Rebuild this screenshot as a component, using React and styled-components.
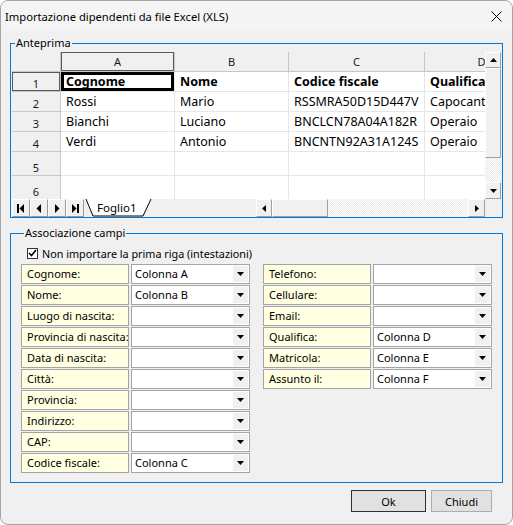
import React from "react";
import styled, { createGlobalStyle } from "styled-components";

const GlobalStyle = createGlobalStyle`
  html, body {
    margin: 0;
    padding: 0;
    background: #ffffff;
  }
  body {
    font-family: "Noto Sans", "DejaVu Sans", sans-serif;
    font-size: 11px;
    color: #000;
  }
  * {
    box-sizing: border-box;
  }
`;

const COLUMNS = [
  { key: "A", width: 114 },
  { key: "B", width: 114 },
  { key: "C", width: 136 },
  { key: "D", width: 114 },
];

const ROWS = [
  { n: 1, h: 20, bold: true, cells: ["Cognome", "Nome", "Codice fiscale", "Qualifica"] },
  { n: 2, h: 20, cells: ["Rossi", "Mario", "RSSMRA50D15D447V", "Capocantiere"] },
  { n: 3, h: 20, cells: ["Bianchi", "Luciano", "BNCLCN78A04A182R", "Operaio"] },
  { n: 4, h: 20, cells: ["Verdi", "Antonio", "BNCNTN92A31A124S", "Operaio"] },
  { n: 5, h: 24, cells: [] },
  { n: 6, h: 24, cells: [] },
];

const LEFT_FIELDS = [
  ["Cognome:", "Colonna A"],
  ["Nome:", "Colonna B"],
  ["Luogo di nascita:", ""],
  ["Provincia di nascita:", ""],
  ["Data di nascita:", ""],
  ["Città:", ""],
  ["Provincia:", ""],
  ["Indirizzo:", ""],
  ["CAP:", ""],
  ["Codice fiscale:", "Colonna C"],
];

const RIGHT_FIELDS = [
  ["Telefono:", ""],
  ["Cellulare:", ""],
  ["Email:", ""],
  ["Qualifica:", "Colonna D"],
  ["Matricola:", "Colonna E"],
  ["Assunto il:", "Colonna F"],
];

/* ---------- window chrome ---------- */

const Window = styled.div`
  width: 513px;
  height: 525px;
  border: 1px solid #a5a5a5;
  border-radius: 8px;
  background: #f0f0f0;
  overflow: hidden;
  display: flex;
  flex-direction: column;
`;

const TitleBar = styled.div`
  height: 30px;
  flex: none;
  background: #f4f4f4;
  display: flex;
  align-items: center;
  justify-content: space-between;
  padding: 0 10px 0 4px;
  font-size: 11.2px;
`;

const Body = styled.div`
  flex: 1;
  display: flex;
  flex-direction: column;
  gap: 8px;
  padding: 5px 9px 0;
`;

const Group = styled.fieldset`
  margin: 0;
  min-inline-size: 0;
  border: 1px solid #0078d7;
  padding: ${({ $pad }) => $pad};
`;

const Legend = styled.legend`
  font-size: 11px;
  line-height: 14px;
  padding: 0 1px;
  margin-left: 3px;
`;

/* ---------- spreadsheet ---------- */

const Spreadsheet = styled.div`
  height: 165px;
  display: flex;
  flex-direction: column;
  background: #ffffff;
`;

const SheetTop = styled.div`
  height: 147px;
  display: flex;
`;

const SheetView = styled.div`
  flex: 1;
  overflow: hidden;
  display: grid;
  grid-template-columns: 49px ${COLUMNS.map((c) => `${c.width}px`).join(" ")};
  grid-template-rows: 20px ${ROWS.map((r) => `${r.h}px`).join(" ")};
  align-content: start;
`;

const HeadCell = styled.div`
  background: #f0f0f0;
  border-right: 1px solid #c6c6c6;
  border-bottom: 1px solid #c6c6c6;
  display: flex;
  justify-content: center;
  align-items: ${({ $bottom }) => ($bottom ? "flex-end" : "center")};
  padding-bottom: ${({ $bottom }) => ($bottom ? "1px" : "0")};
  font-size: 11px;
  line-height: 13px;
  color: #1a1a1a;
  box-shadow: ${({ $active }) => ($active ? "inset 0 0 0 1px #5a5a5a" : "none")};
`;

const DataCell = styled.div`
  border-right: 1px solid #e6e6e6;
  border-bottom: 1px solid #e6e6e6;
  padding-left: 5px;
  font-size: 12.5px;
  line-height: 19px;
  font-weight: ${({ $bold }) => ($bold ? 700 : 400)};
  white-space: nowrap;
  overflow: hidden;
  box-shadow: ${({ $selected }) => ($selected ? "inset 0 0 0 3px #000" : "none")};
`;

const VScroll = styled.div`
  width: 16px;
  flex: none;
  display: flex;
  flex-direction: column;
`;

const HScroll = styled.div`
  width: 229px;
  flex: none;
  display: flex;
`;

const ScrollButton = styled.div`
  flex: none;
  width: ${({ $w }) => $w}px;
  height: ${({ $h }) => $h}px;
  background: #f0f0f0;
  border: 1px solid;
  border-color: #ffffff #a0a0a0 #a0a0a0 #ffffff;
  display: flex;
  align-items: center;
  justify-content: center;
`;

const ScrollTrack = styled.div`
  flex: 1;
  background: repeating-conic-gradient(#ffffff 0 25%, #e9e9e9 0 50%) 0 0 / 2px 2px;
`;

const TabBar = styled.div`
  height: 18px;
  display: flex;
  background: #f0f0f0;
`;

const NavButton = styled.div`
  width: 18px;
  height: 18px;
  flex: none;
  border: 1px solid;
  border-color: #ffffff #9a9a9a #9a9a9a #ffffff;
  display: flex;
  align-items: center;
  justify-content: center;
`;

const SheetTab = styled.div`
  position: relative;
  width: 70px;
  flex: none;
  padding-left: 13px;
  font-size: 11.5px;
  line-height: 17px;
`;

const TabShape = styled.svg`
  position: absolute;
  left: 0;
  top: 0;
`;

const TabLabel = styled.span`
  position: relative;
`;

const BarFill = styled.div`
  flex: 1;
`;

const Corner = styled.div`
  width: 16px;
  flex: none;
  background: #f0f0f0;
`;

/* ---------- field mapping ---------- */

const CheckRow = styled.label`
  height: 16px;
  margin: 0 0 3px 6px;
  display: flex;
  align-items: center;
  gap: 4px;
  font-size: 10.8px;
`;

const CheckBox = styled.span`
  width: 11px;
  height: 11px;
  border: 1px solid #333;
  background: #fff;
  display: inline-flex;
  align-items: center;
  justify-content: center;
`;

const Columns = styled.div`
  display: grid;
  grid-template-columns: 229px 229px;
  column-gap: 13px;
  align-items: start;
`;

const FieldColumn = styled.div`
  display: flex;
  flex-direction: column;
  gap: 1px;
`;

const FieldRow = styled.div`
  height: 20px;
  display: grid;
  grid-template-columns: 108px 1fr;
  column-gap: 2px;
`;

const FieldLabel = styled.div`
  border: 1px solid #a4a4a4;
  background: #ffffe1;
  padding-left: 5px;
  line-height: 18px;
  white-space: nowrap;
  overflow: hidden;
`;

const Combo = styled.div`
  border: 1px solid #a4a4a4;
  background: #ffffff;
  display: flex;
  align-items: stretch;
`;

const ComboValue = styled.span`
  flex: 1;
  padding-left: 3px;
  line-height: 18px;
`;

const ComboArrow = styled.span`
  width: 15px;
  margin: 1px 1px 1px 0;
  background: #f0f0f0;
  display: flex;
  align-items: center;
  justify-content: center;
`;

/* ---------- footer ---------- */

const Footer = styled.div`
  display: flex;
  justify-content: flex-end;
  gap: 5px;
  margin-top: -1px;
  padding-right: 11px;
`;

const Button = styled.button`
  height: 22px;
  width: ${({ $w }) => $w}px;
  background: #e1e1e1;
  border: 1px solid ${({ $default }) => ($default ? "#303030" : "#adadad")};
  font-family: inherit;
  font-size: 11px;
  color: #000;
  padding: 0;
`;

/* ---------- glyphs ---------- */

function Arrow({ dir }) {
  const pts = {
    up: "0,4 3.5,0 7,4",
    down: "0,0 7,0 3.5,4",
    left: "4,0 4,7 0,3.5",
    right: "0,0 0,7 4,3.5",
  }[dir];
  const vertical = dir === "up" || dir === "down";
  return (
    <svg width={vertical ? 7 : 4} height={vertical ? 4 : 7}>
      <polygon points={pts} fill="#000" />
    </svg>
  );
}

function NavGlyph({ kind }) {
  return (
    <svg width="8" height="9">
      {kind === "first" && (
        <>
          <rect x="0" y="0" width="2" height="9" fill="#000" />
          <polygon points="7,0 7,9 2.5,4.5" fill="#000" />
        </>
      )}
      {kind === "prev" && <polygon points="6,0 6,9 1.5,4.5" fill="#000" />}
      {kind === "next" && <polygon points="2,0 2,9 6.5,4.5" fill="#000" />}
      {kind === "last" && (
        <>
          <polygon points="1,0 1,9 5.5,4.5" fill="#000" />
          <rect x="6" y="0" width="2" height="9" fill="#000" />
        </>
      )}
    </svg>
  );
}

function CloseIcon() {
  return (
    <svg width="11" height="11" viewBox="0 0 11 11">
      <path d="M0.5 0.5 L10.5 10.5 M10.5 0.5 L0.5 10.5" stroke="#000" strokeWidth="1" />
    </svg>
  );
}

function Field({ label, value }) {
  return (
    <FieldRow>
      <FieldLabel>{label}</FieldLabel>
      <Combo>
        <ComboValue>{value}</ComboValue>
        <ComboArrow>
          <Arrow dir="down" />
        </ComboArrow>
      </Combo>
    </FieldRow>
  );
}

function Sheet() {
  return (
    <Spreadsheet>
      <SheetTop>
        <SheetView>
          <HeadCell />
          {COLUMNS.map((c) => (
            <HeadCell key={c.key} $active={c.key === "A"}>
              {c.key}
            </HeadCell>
          ))}
          {ROWS.map((r) => (
            <React.Fragment key={r.n}>
              <HeadCell $bottom $active={r.n === 1}>
                {r.n}
              </HeadCell>
              {COLUMNS.map((c, i) => (
                <DataCell key={c.key} $bold={r.bold} $selected={r.n === 1 && i === 0}>
                  {r.cells[i] || ""}
                </DataCell>
              ))}
            </React.Fragment>
          ))}
        </SheetView>
        <VScroll>
          <ScrollButton $w={16} $h={16}>
            <Arrow dir="up" />
          </ScrollButton>
          <ScrollButton $w={16} $h={90} />
          <ScrollTrack />
          <ScrollButton $w={16} $h={17}>
            <Arrow dir="down" />
          </ScrollButton>
        </VScroll>
      </SheetTop>
      <TabBar>
        {["first", "prev", "next", "last"].map((k) => (
          <NavButton key={k}>
            <NavGlyph kind={k} />
          </NavButton>
        ))}
        <SheetTab>
          <TabShape width="70" height="18">
            <polygon points="2,0 9,17 59,17 67,0" fill="#ffffff" />
            <polyline points="2,0 9,17 59,17 67,0" fill="none" stroke="#000" strokeWidth="1" />
          </TabShape>
          <TabLabel>Foglio1</TabLabel>
        </SheetTab>
        <BarFill />
        <HScroll>
          <ScrollButton $w={16} $h={18}>
            <Arrow dir="left" />
          </ScrollButton>
          <ScrollButton $w={56} $h={18} />
          <ScrollTrack />
          <ScrollButton $w={17} $h={18}>
            <Arrow dir="right" />
          </ScrollButton>
        </HScroll>
        <Corner />
      </TabBar>
    </Spreadsheet>
  );
}

export default function App() {
  return (
    <>
      <GlobalStyle />
      <Window>
        <TitleBar>
          <span>Importazione dipendenti da file Excel (XLS)</span>
          <CloseIcon />
        </TitleBar>
        <Body>
          <Group $pad="2px 1px 0 1px">
            <Legend>Anteprima</Legend>
            <Sheet />
          </Group>
          <Group $pad="5px 10px 9px 10px">
            <Legend>Associazione campi</Legend>
            <CheckRow>
              <CheckBox>
                <svg width="9" height="8" viewBox="0 0 9 8">
                  <path d="M1 4 L3.5 6.5 L8 1" stroke="#000" strokeWidth="1.6" fill="none" />
                </svg>
              </CheckBox>
              Non importare la prima riga (intestazioni)
            </CheckRow>
            <Columns>
              <FieldColumn>
                {LEFT_FIELDS.map(([l, v]) => (
                  <Field key={l} label={l} value={v} />
                ))}
              </FieldColumn>
              <FieldColumn>
                {RIGHT_FIELDS.map(([l, v]) => (
                  <Field key={l} label={l} value={v} />
                ))}
              </FieldColumn>
            </Columns>
          </Group>
          <Footer>
            <Button $w={75} $default>
              Ok
            </Button>
            <Button $w={61}>Chiudi</Button>
          </Footer>
        </Body>
      </Window>
    </>
  );
}
